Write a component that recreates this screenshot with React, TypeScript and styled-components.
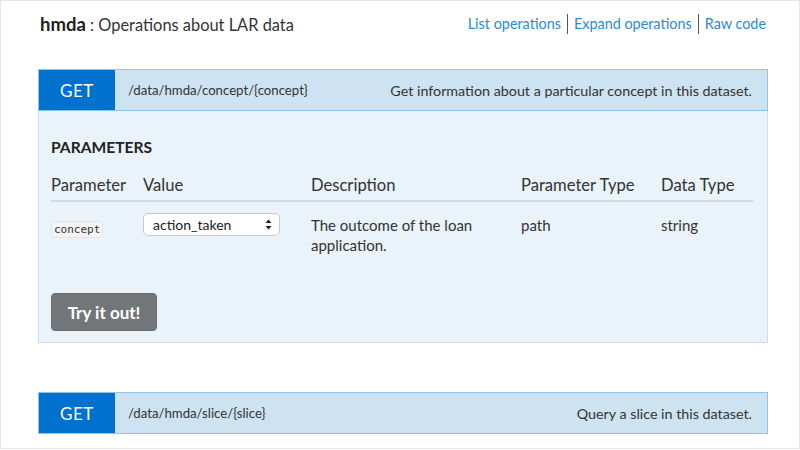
import React from "react";
import styled, { createGlobalStyle } from "styled-components";

const Global = createGlobalStyle`
  html, body { margin: 0; padding: 0; background: #fff; }
  body { font-family: Lato, "Open Sans", sans-serif; color: #333; }
  * { box-sizing: border-box; }
`;

const Frame = styled.div`
  width: 800px;
  height: 449px;
  border: 1px solid #e4e4e4;
  padding: 0 31px 0 37px;
  overflow: hidden;
`;

const TopBar = styled.div`
  display: flex;
  align-items: center;
  justify-content: space-between;
  height: 46px;
  padding: 0 2px 0 2px;
`;

const Title = styled.h2`
  margin: 0;
  font-size: 16.4px;
  font-weight: 400;
  color: #333;
  b { font-size: 18.5px; font-weight: 700; color: #222; }
`;

const Links = styled.div`
  display: flex;
  align-items: center;
`;

const Link = styled.a<{ $first?: boolean }>`
  color: #2b8bd6;
  font-size: 14.4px;
  text-decoration: none;
  padding: 0 6px;
  border-left: ${(p) => (p.$first ? "none" : "1px solid #555")};
  line-height: 20px;
  &:last-child { padding-right: 0; }
`;

const Operation = styled.div<{ $gap: number }>`
  margin-top: ${(p) => p.$gap}px;
`;

const OpHeader = styled.div`
  display: flex;
  align-items: stretch;
  height: 42px;
  background: #cde3f2;
  border: 1px solid #8ec4e8;
`;

const Verb = styled.span`
  width: 76px;
  background: #0071ce;
  color: #fff;
  font-size: 17px;
  display: flex;
  align-items: center;
  justify-content: center;
  letter-spacing: 0.5px;
`;

const Path = styled.span`
  display: flex;
  align-items: center;
  padding-left: 13px;
  font-size: 13.2px;
  color: #333;
`;

const Summary = styled.span`
  margin-left: auto;
  display: flex;
  align-items: center;
  padding-right: 15px;
  font-size: 14.3px;
  color: #333;
`;

const OpBody = styled.div`
  background: #eaf2fa;
  border: 1px solid #c9dff1;
  border-top: none;
  padding: 27px 13px 11px 12px;
`;

const SectionTitle = styled.h4`
  margin: 0 0 15px 0;
  font-size: 15.6px;
  font-weight: 700;
  color: #222;
`;

const Table = styled.table`
  border-collapse: collapse;
  width: 702px;
  table-layout: fixed;
  font-size: 15px;
  color: #333;
`;

const Th = styled.th<{ $w: number }>`
  width: ${(p) => p.$w}px;
  text-align: left;
  font-weight: 400;
  font-size: 16.6px;
  padding: 4px 0 5px 0;
  border-bottom: 2px solid #d3dbe2;
  color: #333;
`;

const Td = styled.td`
  vertical-align: top;
  padding: 13px 0 0 0;
  font-size: 15px;
  line-height: 20px;
`;

const Code = styled.code`
  font-family: "DejaVu Sans Mono", monospace;
  font-size: 11px;
  background: #f4f4f4;
  border: 1px solid #e4e4e4;
  border-radius: 2px;
  padding: 1px 2px;
  position: relative;
  top: 2px;
`;

const Select = styled.div`
  width: 137px;
  height: 23px;
  background: #fff;
  border: 1px solid #c6c9cc;
  border-radius: 5px;
  display: flex;
  align-items: center;
  justify-content: space-between;
  padding: 0 7px 0 9px;
  font-size: 14px;
  color: #222;
  margin-top: -2px;
`;

const Button = styled.button`
  margin-top: 38px;
  width: 106px;
  height: 38px;
  border: 1px solid #6a6d6f;
  border-radius: 4px;
  background: #727678;
  color: #fff;
  font-family: Lato, sans-serif;
  font-size: 17px;
  font-weight: 700;
  display: block;
`;

const Arrows = () => (
  <svg width="7" height="11" viewBox="0 0 7 11">
    <path d="M3.5 0.5 L6.5 4 H0.5 Z" fill="#222" />
    <path d="M3.5 10.5 L6.5 7 H0.5 Z" fill="#222" />
  </svg>
);

export default function App() {
  return (
    <>
      <Global />
      <Frame>
        <TopBar>
          <Title>
            <b>hmda</b> : Operations about LAR data
          </Title>
          <Links>
            <Link $first href="#">List operations</Link>
            <Link href="#">Expand operations</Link>
            <Link href="#">Raw code</Link>
          </Links>
        </TopBar>

        <Operation $gap={22}>
          <OpHeader>
            <Verb>GET</Verb>
            <Path>/data/hmda/concept/{"{concept}"}</Path>
            <Summary>Get information about a particular concept in this dataset.</Summary>
          </OpHeader>
          <OpBody>
            <SectionTitle>PARAMETERS</SectionTitle>
            <Table>
              <thead>
                <tr>
                  <Th $w={92}>Parameter</Th>
                  <Th $w={168}>Value</Th>
                  <Th $w={210}>Description</Th>
                  <Th $w={140}>Parameter Type</Th>
                  <Th $w={92}>Data Type</Th>
                </tr>
              </thead>
              <tbody>
                <tr>
                  <Td><Code>concept</Code></Td>
                  <Td>
                    <Select>
                      <span>action_taken</span>
                      <Arrows />
                    </Select>
                  </Td>
                  <Td>The outcome of the loan application.</Td>
                  <Td>path</Td>
                  <Td>string</Td>
                </tr>
              </tbody>
            </Table>
            <Button>Try it out!</Button>
          </OpBody>
        </Operation>

        <Operation $gap={49}>
          <OpHeader>
            <Verb>GET</Verb>
            <Path>/data/hmda/slice/{"{slice}"}</Path>
            <Summary>Query a slice in this dataset.</Summary>
          </OpHeader>
        </Operation>
      </Frame>
    </>
  );
}
